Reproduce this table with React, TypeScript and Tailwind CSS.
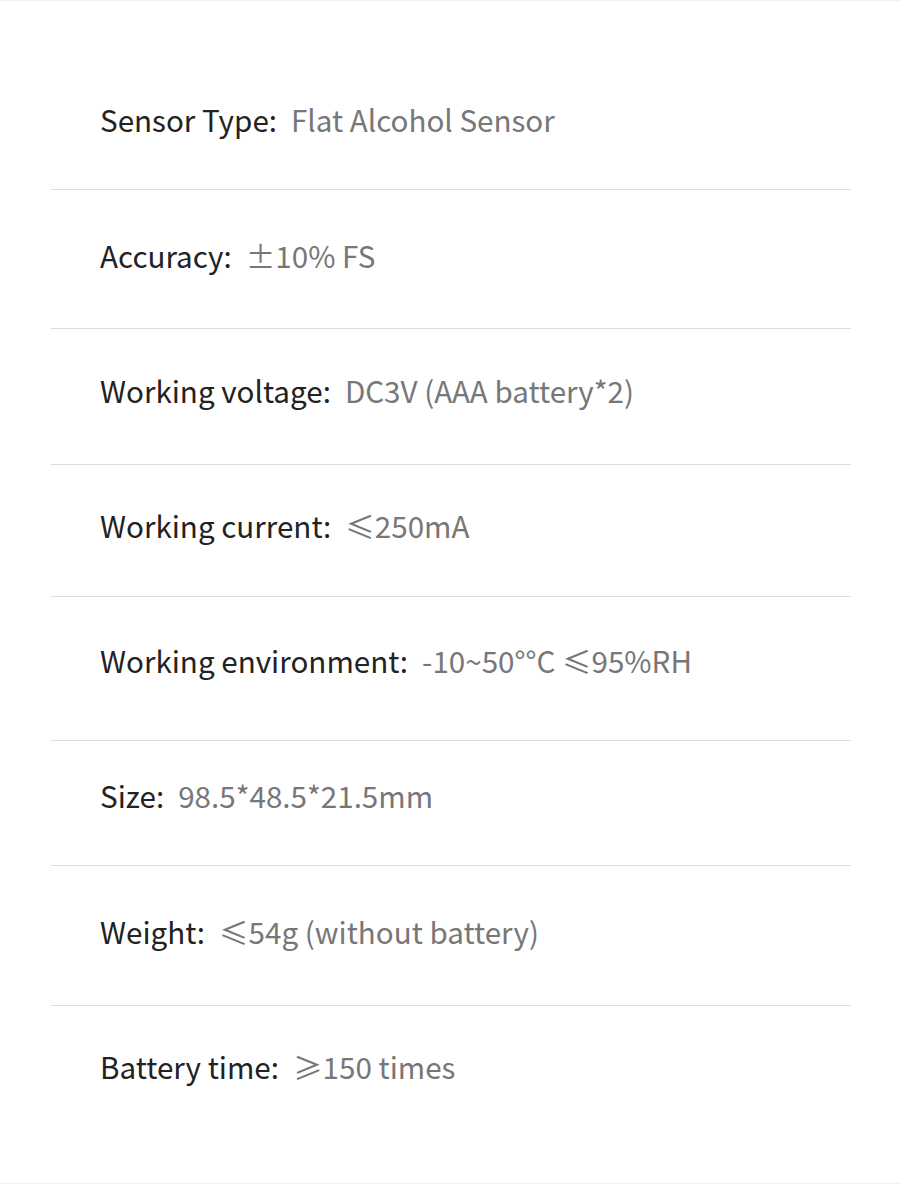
import React from "react";

const rows: { label: string; value: string; pt: string; pb: string }[] = [
  { label: "Sensor Type:", value: "Flat Alcohol Sensor", pt: "pt-[99px]", pb: "pb-[49px]" },
  { label: "Accuracy:", value: "±10% FS", pt: "pt-[46px]", pb: "pb-[52px]" },
  { label: "Working voltage:", value: "DC3V (AAA battery*2)", pt: "pt-[42px]", pb: "pb-[53px]" },
  { label: "Working current:", value: "≤250mA", pt: "pt-[41px]", pb: "pb-[50px]" },
  { label: "Working environment:", value: "-10~50°°C ≤95%RH", pt: "pt-[44px]", pb: "pb-[59px]" },
  { label: "Size:", value: "98.5*48.5*21.5mm", pt: "pt-[35px]", pb: "pb-[49px]" },
  { label: "Weight:", value: "≤54g (without battery)", pt: "pt-[46px]", pb: "pb-[53px]" },
  { label: "Battery time:", value: "≥150 times", pt: "pt-[41px]", pb: "pb-[96px]" },
];

export default function App() {
  return (
    <div
      className="w-[900px] h-[1184px] bg-white border-t border-b border-[#f2f2f2] overflow-hidden"
      style={{ fontFamily: '"Noto Sans CJK SC", "Noto Sans", sans-serif' }}
    >
      {rows.map((r, i) => (
        <div
          key={i}
          className={`ml-[51px] w-[800px] ${r.pt} ${r.pb} ${i < rows.length - 1 ? "border-b border-[#dcdcdc]" : ""}`}
        >
          <div className="h-[40px] flex items-center pl-[49px] text-[29.6px] leading-[40px] whitespace-nowrap">
            <span className="text-[#222222]">{r.label}</span>
            <span className="ml-[14px] text-[#777777]">{r.value}</span>
          </div>
        </div>
      ))}
    </div>
  );
}
